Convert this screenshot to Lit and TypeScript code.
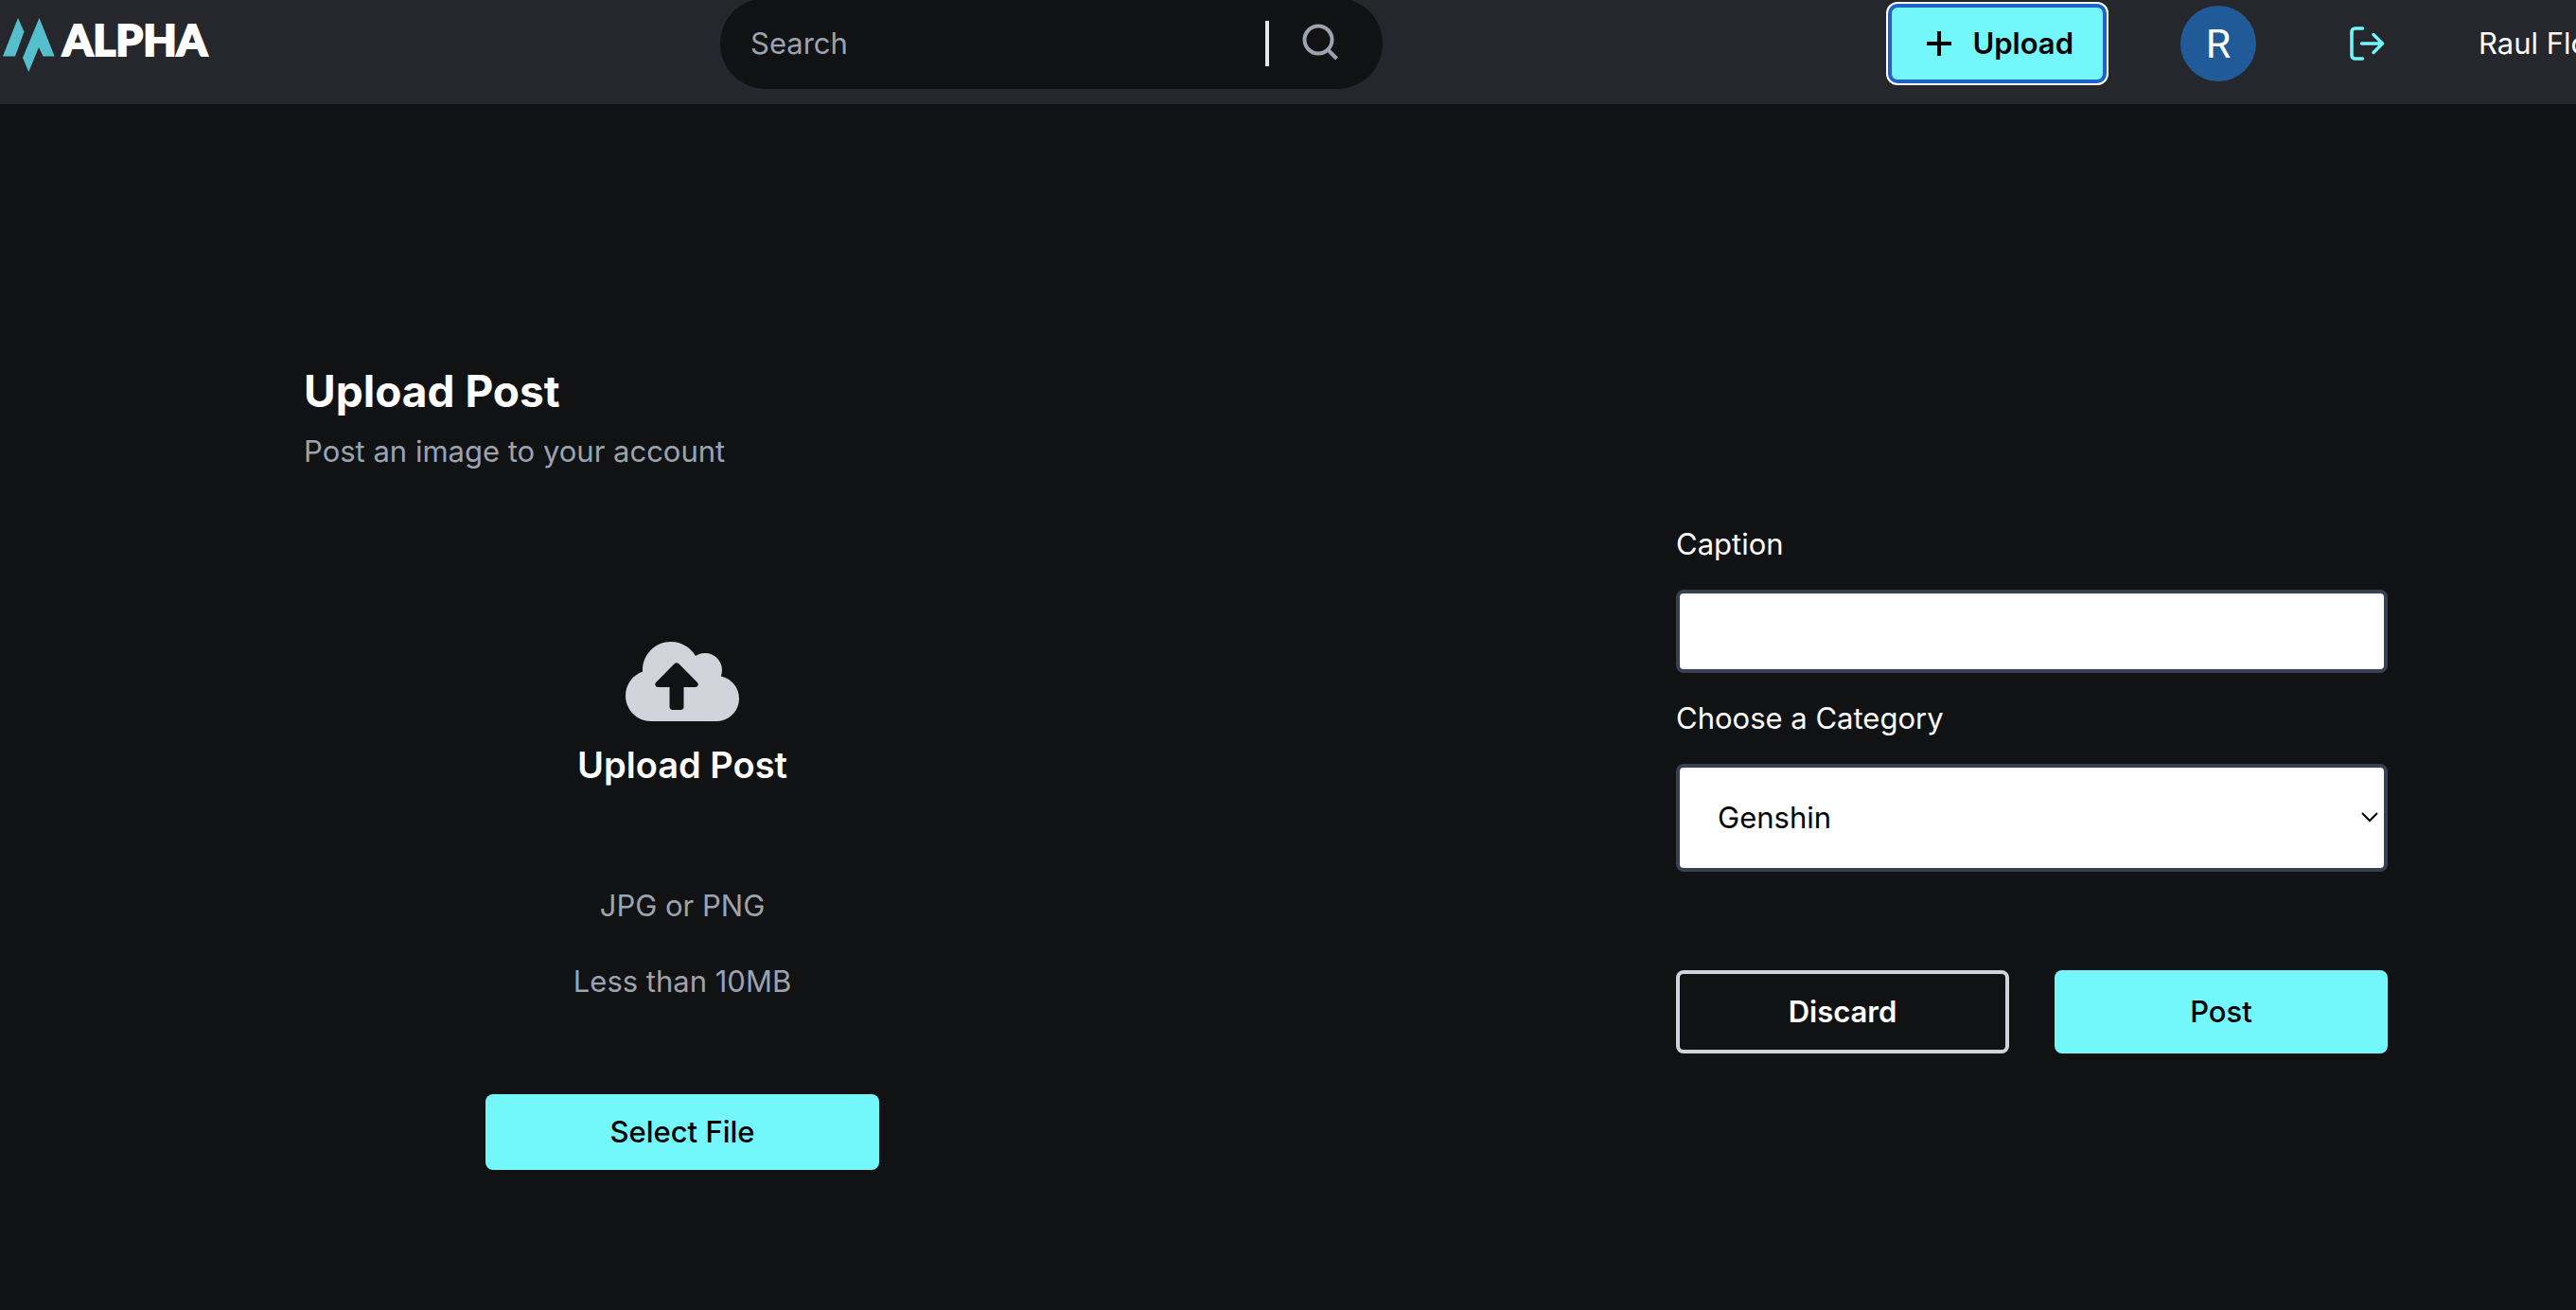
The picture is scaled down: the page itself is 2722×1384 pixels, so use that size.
import { LitElement, html, css, svg } from "lit";
import { customElement } from "lit/decorators.js";

const logo = svg`
  <path fill="#55c0cb" d="M19 19 25.500 33.500 16 59.500H3Z"/>
  <path fill="#55c0cb" d="M41.500 19 57.700 59.500H45.500L41 50 30.300 76 24 61Z"/>`;

@customElement("app-root")
export class AppRoot extends LitElement {
  static styles = css`
    :host {
      display: block;
      min-height: 100vh;
      overflow: hidden;
      background: #111214;
      color: #fff;
      font: 400 31px/48px Inter, "Liberation Sans", sans-serif;
    }
    * { box-sizing: border-box; }
    svg { display: block; flex: none; }
    button, input, select { font: inherit; margin: 0; }
    button { cursor: pointer; }
    .header {
      display: grid;
      grid-template-columns: 761fr 700px 1261fr;
      height: 110px;
      background: #26272c;
      white-space: nowrap;
    }
    .brand {
      display: flex;
      align-items: flex-start;
      color: #fff;
      text-decoration: none;
      font: 900 46px/84px Lato, sans-serif;
      -webkit-text-stroke: 2px #fff;
    }
    .mark { width: 66px; height: 80px; }
    .search {
      display: flex;
      align-items: center;
      height: 96px;
      margin-top: -2px;
      padding: 0 44px 0 32px;
      border-radius: 48px;
      background: #111214;
    }
    .query {
      flex: 1;
      min-width: 0;
      padding: 0;
      border: 0;
      outline: 0;
      background: none;
      color: #fff;
    }
    .query::placeholder { color: #9ca3af; opacity: 1; }
    .find {
      padding: 0 0 0 32px;
      border: 0;
      border-left: 4px solid #e5e7eb;
      background: none;
      height: 48px;
      display: flex;
      align-items: center;
      color: #9ca3af;
    }
    .actions {
      display: flex;
      align-items: center;
      justify-content: flex-end;
      height: 92px;
    }
    .upload {
      display: flex;
      align-items: center;
      gap: 16px;
      height: 76px;
      padding: 0 31px;
      border: 0;
      border-radius: 6px;
      background: #73f7fb;
      color: #000;
      font-weight: 600;
      box-shadow: 0 0 0 4px #1f62c9, 0 0 0 6px #fff;
    }
    .avatar {
      width: 80px;
      height: 80px;
      margin-left: 82px;
      border-radius: 50%;
      background: #205a99;
      font: 400 43px/80px Roboto, sans-serif;
      text-align: center;
    }
    .logout {
      margin-left: 93px;
      padding: 0;
      border: 0;
      background: none;
      color: #73f7fb;
    }
    .user { width: 103px; margin-left: 92px; }
    .page {
      display: flex;
      justify-content: space-between;
      padding: 269px 199px 0 321px;
    }
    .title { margin: 0; font-size: 46px; line-height: 68px; font-weight: 700; }
    .note { margin: 6px 0 0; color: #9ca3af; }
    .drop {
      display: flex;
      flex-direction: column;
      align-items: center;
      margin: 171px 0 0 192px;
      width: 416px;
    }
    .heading { margin: 10px 0 95px; font-size: 38px; line-height: 60px; font-weight: 600; }
    .hint { margin: 0 0 32px; color: #9ca3af; }
    .solid, .ghost {
      border: 0;
      border-radius: 8px;
      background: #73f7fb;
      color: #000;
      font-weight: 500;
    }
    .pick { width: 100%; height: 80px; margin-top: 63px; }
    .form {
      display: flex;
      flex-direction: column;
      gap: 24px;
      width: 752px;
      margin-top: 172px;
    }
    .field {
      width: 100%;
      height: 88px;
      padding: 0 40px;
      border: 4px solid #374151;
      border-radius: 8px;
      background-color: #fff;
      color: #000;
    }
    .choice { display: grid; align-items: center; }
    .choice > * { grid-area: 1 / 1; }
    .list { height: 114px; appearance: none; }
    .chevron { justify-self: end; margin-right: 9px; pointer-events: none; }
    .buttons { display: grid; grid-template-columns: 1fr 1fr; gap: 48px; margin-top: 80px; }
    .buttons > * { height: 88px; }
    .ghost { border: 4px solid #d1d5db; background: none; color: #fff; font-weight: 600; }
  `;

  render() {
    return html`
      <header class="header">
        <a class="brand" href="#">
          <svg class="mark" viewBox="0 0 66 80" aria-hidden="true">${logo}</svg>
          <span>ALPHA</span>
        </a>
        <form class="search" role="search">
          <input class="query" type="text" placeholder="Search" aria-label="Search" />
          <button class="find" type="button" aria-label="Run search">
            <svg width="44" height="44" viewBox="0 0 44 44" fill="none" stroke="currentColor" stroke-width="4">
              <circle cx="20" cy="18" r="14.500" /><path d="m30 28.500 9.500 9.500" />
            </svg>
          </button>
        </form>
        <div class="actions">
          <button class="upload" type="button">
            <svg width="38" height="38" viewBox="0 0 38 38" fill="none" stroke="currentColor" stroke-width="4">
              <path d="M19 6v26M6 19h26" />
            </svg>
            <span>Upload</span>
          </button>
          <div class="avatar">R</div>
          <button class="logout" type="button" aria-label="Log out">
            <svg width="50" height="48" viewBox="0 0 50 48" fill="none" stroke="currentColor" stroke-width="3.500" stroke-linecap="round" stroke-linejoin="round">
              <path d="M19.500 8H11.500a3.500 3.500 0 0 0-3.500 3.500v25a3.500 3.500 0 0 0 3.500 3.500h8M18.500 24h22M31 14.500l9.500 9.500-9.500 9.500" />
            </svg>
          </button>
          <span class="user">Raul Flores</span>
        </div>
      </header>
      <main class="page">
        <section>
          <h1 class="title">Upload Post</h1>
          <p class="note">Post an image to your account</p>
          <div class="drop">
            <svg width="120" height="96" viewBox="0 0 640 512" fill="#d1d5db" aria-hidden="true">
              <path d="M537.6 226.6c4.1-10.7 6.4-22.4 6.4-34.6 0-53-43-96-96-96-19.7 0-38.1 6-53.3 16.2C367 64.2 315.3 32 256 32c-88.4 0-160 71.6-160 160 0 2.7.1 5.4.2 8.1C40.2 219.8 0 273.2 0 336c0 79.5 64.5 144 144 144h368c70.7 0 128-57.3 128-128 0-61.9-44-113.6-102.4-125.4zM393.4 288H328v112c0 8.8-7.2 16-16 16h-48c-8.8 0-16-7.2-16-16V288h-65.4c-14.3 0-21.4-17.2-11.3-27.3l105.4-105.4c6.2-6.2 16.4-6.2 22.6 0l105.4 105.4c10.1 10.1 2.9 27.3-11.3 27.3z" />
            </svg>
            <h2 class="heading">Upload Post</h2>
            <p class="hint">JPG or PNG</p>
            <p class="hint">Less than 10MB</p>
            <button class="solid pick" type="button">Select File</button>
          </div>
        </section>
        <form class="form">
          <label for="caption">Caption</label>
          <input class="field" id="caption" type="text" />
          <label for="category">Choose a Category</label>
          <div class="choice">
            <select class="field list" id="category"><option>Genshin</option></select>
            <svg class="chevron" width="20" height="14" viewBox="0 0 20 14" fill="none" stroke="#000" stroke-width="2">
              <path d="m2 2 8 8 8-8" />
            </svg>
          </div>
          <div class="buttons">
            <button class="ghost" type="button">Discard</button>
            <button class="solid" type="button">Post</button>
          </div>
        </form>
      </main>
    `;
  }
}
